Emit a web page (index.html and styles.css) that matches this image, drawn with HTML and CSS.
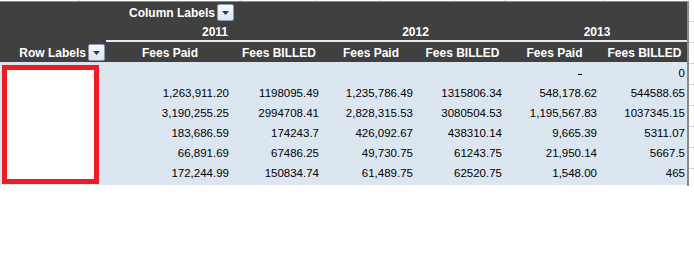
FILE: index.html
```html
<!DOCTYPE html>
<html>
<head>
<meta charset="utf-8">
<link rel="stylesheet" href="styles.css">
</head>
<body>
<div class="sheet">
  <div class="topstrip">
    <span class="g" style="width:80px"></span><span class="g" style="width:98px"></span><span class="g" style="width:63px"></span><span class="g" style="width:75px"></span><span class="g" style="width:64px"></span><span class="g" style="width:75px"></span><span class="g" style="width:50px"></span><span class="g" style="width:99px"></span>
  </div>
  <div class="main">
    <div class="pivot">
      <div class="hcell"></div>
      <div class="hcell right">Column Labels<span class="btn"><svg width="7" height="4" viewBox="0 0 7 4"><path d="M0 0H7L3.5 4Z" fill="#1f3a6e"/></svg></span></div>
      <div class="hcell span5"></div>

      <div class="hcell"></div>
      <div class="hcell year span2">2011</div>
      <div class="hcell year span2">2012</div>
      <div class="hcell year span2">2013</div>

      <div class="hcell right rl">Row Labels<span class="btn"><svg width="7" height="4" viewBox="0 0 7 4"><path d="M0 0H7L3.5 4Z" fill="#1f3a6e"/></svg></span></div>
      <div class="hcell center">Fees Paid</div>
      <div class="hcell center">Fees BILLED</div>
      <div class="hcell center">Fees Paid</div>
      <div class="hcell center">Fees BILLED</div>
      <div class="hcell center">Fees Paid</div>
      <div class="hcell center">Fees BILLED</div>

      <div class="d"></div><div class="d"></div><div class="d"></div><div class="d"></div><div class="d"></div><div class="d"><span class="dash"></span></div><div class="d last">0</div>
      <div class="d"></div><div class="d">1,263,911.20</div><div class="d">1198095.49</div><div class="d">1,235,786.49</div><div class="d">1315806.34</div><div class="d">548,178.62</div><div class="d last">544588.65</div>
      <div class="d"></div><div class="d">3,190,255.25</div><div class="d">2994708.41</div><div class="d">2,828,315.53</div><div class="d">3080504.53</div><div class="d">1,195,567.83</div><div class="d last">1037345.15</div>
      <div class="d"></div><div class="d">183,686.59</div><div class="d">174243.7</div><div class="d">426,092.67</div><div class="d">438310.14</div><div class="d">9,665.39</div><div class="d last">5311.07</div>
      <div class="d"></div><div class="d">66,891.69</div><div class="d">67486.25</div><div class="d">49,730.75</div><div class="d">61243.75</div><div class="d">21,950.14</div><div class="d last">5667.5</div>
      <div class="d"></div><div class="d">172,244.99</div><div class="d">150834.74</div><div class="d">61,489.75</div><div class="d">62520.75</div><div class="d">1,548.00</div><div class="d last">465</div>
      <div class="foot span7"></div>
    </div>
    <div class="gridright"></div>
    <div class="redbox"></div>
  </div>
</div>
</body>
</html>
```
FILE: styles.css
```css
html, body {
  margin: 0;
  padding: 0;
  background: #ffffff;
}
body {
  font-family: "Liberation Sans", Arial, sans-serif;
  width: 694px;
  height: 271px;
  overflow: hidden;
}
.sheet {
  width: 694px;
}
.topstrip {
  display: flex;
  height: 1px;
  overflow: hidden;
}
.g {
  display: block;
  height: 1px;
  border-right: 1px solid #d0d7e5;
  box-sizing: border-box;
  flex: none;
}
.main {
  position: relative;
  display: flex;
}
.pivot {
  display: grid;
  grid-template-columns: 106px 128px 90px 94px 89px 95px 85px;
  grid-template-rows: 20px 20px 20px repeat(6, 20px) 3px;
  border-top: 1px solid #8a8a8a;
  border-right: 2px solid #8a8a8a;
  flex: none;
}
.hcell {
  background: #404040;
  color: #ffffff;
  font-weight: bold;
  font-size: 12px;
  display: flex;
  align-items: center;
  white-space: nowrap;
  overflow: hidden;
}
.span5 { grid-column: span 5; }
.span2 { grid-column: span 2; }
.span7 { grid-column: span 7; }
.right { justify-content: flex-end; }
.center { justify-content: center; padding-top: 1px; }
.year {
  justify-content: center;
  box-sizing: border-box;
  border-bottom: 2px solid #e4e9f0;
  padding-top: 1px;
}
.hcell.right { padding-top: 1px; }
.rl { padding-right: 1px; }
.btn {
  display: inline-flex;
  align-items: center;
  justify-content: center;
  width: 15px;
  height: 15px;
  margin-left: 2px;
  border: 1px solid #8d9bb5;
  border-radius: 2px;
  background: linear-gradient(#f6f8fb, #dfe5ee);
  flex: none;
}
.d {
  background: #dce6f1;
  color: #000000;
  font-size: 11.5px;
  display: flex;
  align-items: center;
  justify-content: flex-end;
  padding-right: 5px;
  white-space: nowrap;
  padding-top: 1px;
}
.d.last { padding-right: 2px; }
.dash {
  display: block;
  width: 4px;
  height: 1px;
  background: #000;
  margin-right: 15px;
  margin-top: 3px;
}
.foot {
  background: #dce6f1;
}
.gridright {
  flex: 1;
  height: 185px;
  background: repeating-linear-gradient(to bottom, transparent 0, transparent 20px, #d0d7e5 20px, #d0d7e5 21px);
}
.redbox {
  position: absolute;
  left: 2px;
  top: 64px;
  width: 97px;
  height: 119px;
  box-sizing: border-box;
  border: 5px solid #ed1c24;
  background: #ffffff;
}
```
